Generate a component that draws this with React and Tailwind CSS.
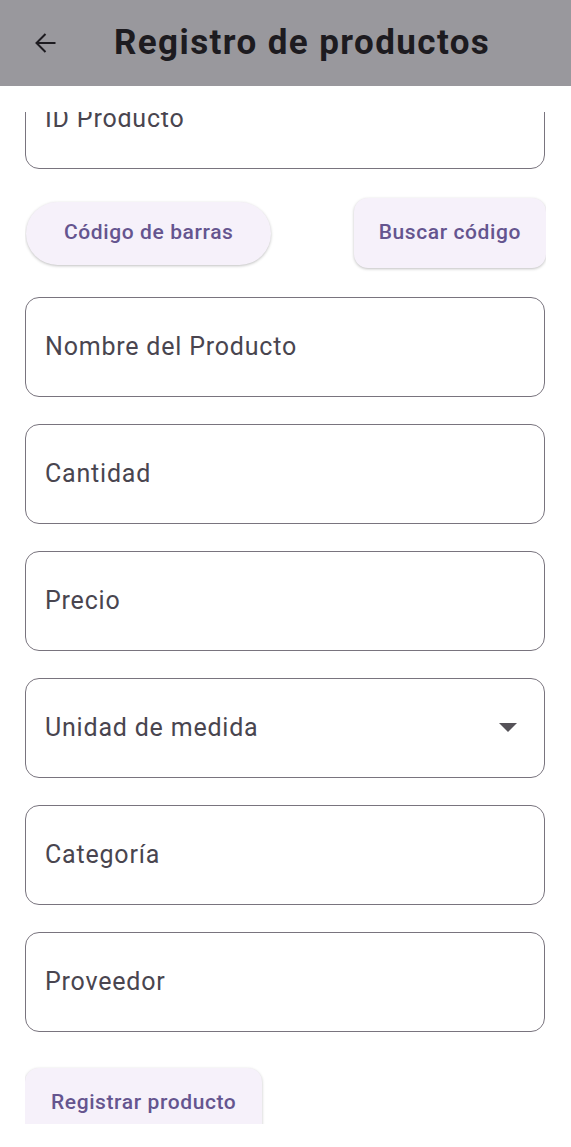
import React from 'react';

const fields = ['Nombre del Producto', 'Cantidad', 'Precio'];
const moreFields = ['Categoría', 'Proveedor'];

const Field = ({ label, dropdown = false }) => (
  <div className="h-[100px] w-[520px] shrink-0 rounded-[14px] border-[1.5px] border-[#79747e] flex items-center justify-between pl-[19px] pr-[27px]">
    <span className="text-[25px] tracking-[0.8px] text-[#49454f]">{label}</span>
    {dropdown && (
      <svg width="18" height="10" viewBox="0 0 18 10">
        <path d="M0 0 L18 0 L9 9 Z" fill="#555258" />
      </svg>
    )}
  </div>
);

const btn = 'bg-[#f6f1fa] text-[#65558f] text-[21px] font-medium tracking-[0.6px] shadow-[0_1px_3px_rgba(0,0,0,0.25)]';

const App = () => {
  return (
    <div className="w-[571px] h-[1147px] bg-white overflow-hidden" style={{ fontFamily: 'Roboto, "Liberation Sans", sans-serif' }}>
      <header className="h-[86px] bg-[#99989d] flex items-center">
        <svg className="ml-[33px]" width="25" height="24" viewBox="0 0 24 24" fill="none" stroke="#1d1b20" strokeWidth="2">
          <path d="M22 12H3M12 3l-9 9 9 9" />
        </svg>
        <h1 className="ml-[56px] text-[35px] font-bold text-[#1d1b20] tracking-[1.4px]">Registro de productos</h1>
      </header>

      <div className="pt-[26px] px-[25px]">
        <div className="h-[1012px] overflow-hidden">
          <div className="mt-[-43px] flex flex-col">
            <Field label="ID Producto" />

            <div className="mt-[29px] h-[70px] flex items-center justify-between pl-[1px]">
              <button className={`h-[63px] px-[38px] rounded-full ${btn}`}>
                Código de barras
              </button>
              <button className={`h-[70px] px-[25px] rounded-[14px] ${btn}`}>
                Buscar código
              </button>
            </div>

            <div className="mt-[29px] flex flex-col gap-[27px]">
              {fields.map((f) => (
                <Field key={f} label={f} />
              ))}
              <Field label="Unidad de medida" dropdown />
              {moreFields.map((f) => (
                <Field key={f} label={f} />
              ))}
            </div>

            <div className="mt-[36px]">
              <button className={`h-[70px] px-[26px] rounded-[14px] ${btn}`}>
                Registrar producto
              </button>
            </div>
          </div>
        </div>
      </div>
    </div>
  );
};

export default App;
